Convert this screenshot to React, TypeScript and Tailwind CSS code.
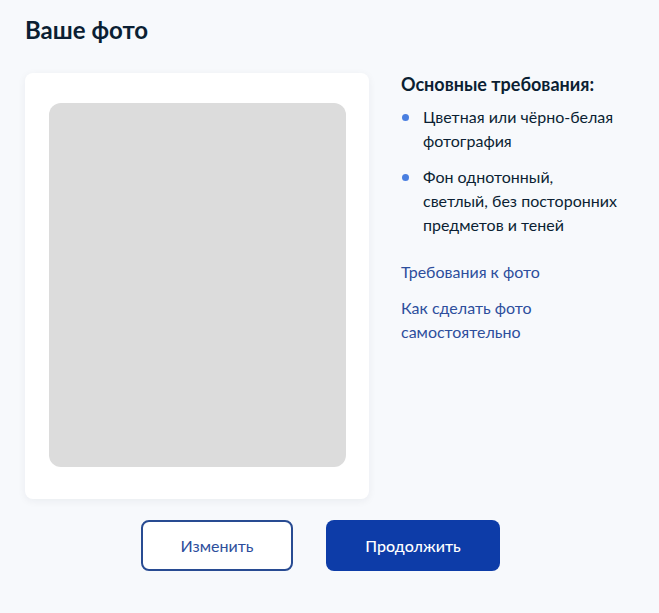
import React from 'react';

const requirements: React.ReactNode[] = [
  <>Цветная или чёрно-белая<br />фотография</>,
  <>Фон однотонный,<br />светлый, без посторонних<br />предметов и теней</>,
];

const App: React.FC = () => {
  return (
    <div className="min-h-screen bg-[#f7f9fc] px-[25px] pt-[13px] font-['Lato',_'Noto_Sans',_sans-serif] text-[#0b1f33]">
      <h1 className="text-[24px] font-bold leading-[34px]">Ваше фото</h1>

      <div className="mt-[26px] flex gap-[32px]">
        {/* Photo card */}
        <div className="h-[426px] w-[344px] rounded-[8px] bg-white pl-[24px] pt-[30px] shadow-[0_2px_8px_rgba(11,31,51,0.06)]">
          <div className="h-[364px] w-[297px] rounded-[12px] bg-[#dcdcdc]" />
        </div>

        {/* Requirements */}
        <div>
          <h2 className="text-[18px] font-bold leading-[22px]">Основные требования:</h2>
          <ul className="mt-[10px] space-y-[12px]">
            {requirements.map((item, i) => (
              <li key={i} className="flex text-[16px] leading-[24px]">
                <span className="ml-[1px] mr-[14px] mt-[9px] h-[7px] w-[7px] shrink-0 rounded-full bg-[#4a7fe0]" />
                <span>{item}</span>
              </li>
            ))}
          </ul>
          <div className="mt-[23px] space-y-[12px] text-[16px] leading-[24px] text-[#2d4e9c]">
            <a className="block" href="#">Требования к фото</a>
            <a className="block" href="#">Как сделать фото<br />самостоятельно</a>
          </div>
        </div>
      </div>

      <div className="mt-[21px] ml-[116px] flex gap-[33px]">
        <button className="h-[51px] w-[152px] rounded-[8px] border-2 border-[#284b92] bg-white text-[16px] text-[#2d4e9c]">
          Изменить
        </button>
        <button className="h-[51px] w-[174px] rounded-[8px] bg-[#0d3ca8] text-[16px] font-medium text-white">
          Продолжить
        </button>
      </div>
    </div>
  );
};

export default App;
